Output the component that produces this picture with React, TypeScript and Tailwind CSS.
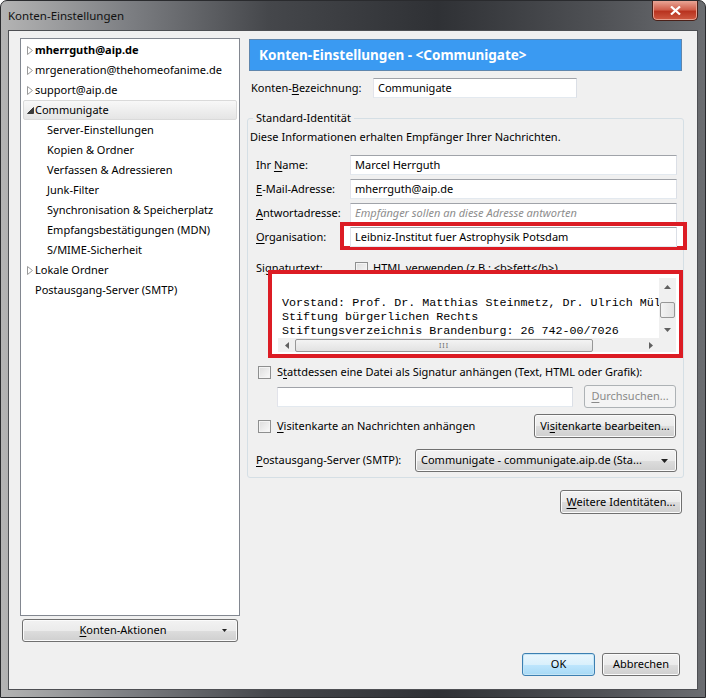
import React from 'react';

function U({ children }: { children: React.ReactNode }) {
  return <span className="underline decoration-1 underline-offset-[2px]">{children}</span>;
}

function Checkbox() {
  return (
    <span className="inline-block w-[13px] h-[13px] shrink-0 border border-[#8e8f8f] bg-[linear-gradient(135deg,#dcdcdc,#fafafa)] shadow-[inset_0_0_0_1px_#f4f4f4]" />
  );
}

function TextBox({ value, placeholder, className = '' }: { value?: string; placeholder?: string; className?: string }) {
  return (
    <div
      className={`h-[20px] min-w-0 bg-white border border-[#abadb3] border-t-[#a0a3a9] border-l-[#e2e3ea] border-r-[#dbdfe6] border-b-[#e3e9ef] flex items-center pl-[4px] overflow-hidden whitespace-nowrap ${className}`}
    >
      {value ? (
        <span className="text-black">{value}</span>
      ) : (
        <span className="italic text-[#8d8d8d]">{placeholder}</span>
      )}
    </div>
  );
}

function Button({
  children,
  className = '',
  disabled = false,
  primary = false,
}: {
  children: React.ReactNode;
  className?: string;
  disabled?: boolean;
  primary?: boolean;
}) {
  let look =
    'border-[#707070] bg-[linear-gradient(to_bottom,#f2f2f2_0%,#ebebeb_50%,#dddddd_51%,#cfcfcf_100%)] shadow-[inset_0_0_0_1px_#fbfbfb] text-black';
  if (disabled) look = 'border-[#adb2b5] bg-[#f4f4f4] text-[#8a8a8a]';
  if (primary)
    look =
      'border-[#3c7fb1] bg-[linear-gradient(to_bottom,#eaf6fd_0%,#d9f0fc_50%,#bee6fd_51%,#a7d9f5_100%)] shadow-[inset_0_0_0_1px_#c4e5f6] text-black';
  return (
    <div className={`flex items-center justify-center rounded-[3px] border ${look} ${className}`}>{children}</div>
  );
}

function Collapsed() {
  return (
    <svg width="6" height="9" viewBox="0 0 6 9">
      <path d="M0.5 0.5 L5.5 4.5 L0.5 8.5 Z" fill="#fff" stroke="#9a9a9a" strokeWidth="1" />
    </svg>
  );
}

function Expanded() {
  return (
    <svg width="7" height="7" viewBox="0 0 7 7">
      <path d="M6.5 0.5 L6.5 6.5 L0.5 6.5 Z" fill="#3c3c3c" stroke="#3c3c3c" strokeWidth="1" />
    </svg>
  );
}

type Node = { label: string; state?: 'open' | 'closed'; sub?: boolean; bold?: boolean; selected?: boolean };

const tree: Node[] = [
  { label: 'mherrguth@aip.de', state: 'closed', bold: true },
  { label: 'mrgeneration@thehomeofanime.de', state: 'closed' },
  { label: 'support@aip.de', state: 'closed' },
  { label: 'Communigate', state: 'open', selected: true },
  { label: 'Server-Einstellungen', sub: true },
  { label: 'Kopien & Ordner', sub: true },
  { label: 'Verfassen & Adressieren', sub: true },
  { label: 'Junk-Filter', sub: true },
  { label: 'Synchronisation & Speicherplatz', sub: true },
  { label: 'Empfangsbestätigungen (MDN)', sub: true },
  { label: 'S/MIME-Sicherheit', sub: true },
  { label: 'Lokale Ordner', state: 'closed' },
  { label: 'Postausgang-Server (SMTP)' },
];

function TreeRow({ node }: { node: Node }) {
  return (
    <div
      className={`h-[20px] mx-[2px] flex items-center rounded-[2px] border ${
        node.selected
          ? 'border-[#dadada] bg-[linear-gradient(to_bottom,#f8f8f8,#e5e5e5)]'
          : 'border-transparent'
      }`}
    >
      {node.sub ? (
        <span className="w-[23px] shrink-0" />
      ) : (
        <span className="w-[11px] shrink-0 flex items-center pl-[3px]">
          {node.state === 'closed' && <Collapsed />}
          {node.state === 'open' && <Expanded />}
        </span>
      )}
      <span className={`whitespace-nowrap ${node.bold ? 'font-bold' : ''}`}>{node.label}</span>
    </div>
  );
}

function VScrollbar() {
  return (
    <div className="w-[17px] shrink-0 bg-[#f0f0f0] flex flex-col items-center">
      <div className="h-[17px] w-full flex items-center justify-center">
        <svg width="7" height="4" viewBox="0 0 7 4">
          <path d="M0 4 L3.5 0 L7 4 Z" fill="#606060" />
        </svg>
      </div>
      <div className="w-[15px] h-[16px] mt-[7px] rounded-[2px] border border-[#979797] bg-[linear-gradient(to_right,#f3f3f3,#e2e2e2)]" />
      <div className="flex-1" />
      <div className="h-[17px] w-full flex items-center justify-center">
        <svg width="7" height="4" viewBox="0 0 7 4">
          <path d="M0 0 L7 0 L3.5 4 Z" fill="#606060" />
        </svg>
      </div>
    </div>
  );
}

function HScrollbar() {
  return (
    <div className="flex-1 min-w-0 h-[14px] bg-[#f0f0f0] flex items-center">
      <div className="w-[17px] shrink-0 flex items-center justify-center">
        <svg width="4" height="7" viewBox="0 0 4 7">
          <path d="M4 0 L0 3.5 L4 7 Z" fill="#606060" />
        </svg>
      </div>
      <div className="w-[298px] h-[13px] rounded-[2px] border border-[#979797] bg-[linear-gradient(to_bottom,#f3f3f3,#e2e2e2)] flex items-center justify-center">
        <span className="text-[7px] leading-none tracking-[1px] text-[#6a6a6a]">III</span>
      </div>
      <div className="flex-1" />
      <div className="w-[17px] shrink-0 flex items-center justify-center">
        <svg width="4" height="7" viewBox="0 0 4 7">
          <path d="M0 0 L4 3.5 L0 7 Z" fill="#606060" />
        </svg>
      </div>
    </div>
  );
}

export default function App() {
  return (
    <div className="w-[706px] h-[698px] font-['Noto_Sans',sans-serif] text-[11px] text-black rounded-t-[7px] border border-[#2a2b2e] bg-[linear-gradient(to_right,#b4b4b4,#7d7f83_18%,#45474b_38%,#2f3135_62%,#4f5155_85%,#6b6d71)] flex flex-col">
      {/* title bar */}
      <div className="h-[29px] flex items-start">
        <span className="pl-[7px] pt-[6px] text-[11.5px] text-[#111] whitespace-nowrap">Konten-Einstellungen</span>
        <div className="ml-auto mr-[7px] w-[46px] h-[20px] rounded-b-[5px] border border-t-0 border-[#4a2018] bg-[linear-gradient(to_bottom,#e9a595_0%,#d0604d_45%,#b93420_55%,#cf5a42_100%)] shadow-[inset_0_0_0_1px_#e7a191] flex items-center justify-center">
          <svg width="11" height="9" viewBox="0 0 11 9">
            <path d="M1 0.5 L10 8.5 M10 0.5 L1 8.5" stroke="#fff" strokeWidth="2.2" />
          </svg>
        </div>
      </div>

      {/* client area */}
      <div className="mx-[7px] h-[660px] bg-[#f0f0f0] border border-[#4d4f53] flex flex-col pt-[7px] pl-[11px] pr-[15px]">
        <div className="h-[604px] flex">
          {/* left column */}
          <div className="w-[220px] shrink-0 flex flex-col">
            <div className="flex-1 bg-white border border-[#828790] pt-[1px]">
              {tree.map((n) => (
                <TreeRow key={n.label} node={n} />
              ))}
            </div>
            <Button className="mt-[3px] h-[23px] mx-[2px] relative">
              <span className="pr-[14px]">
                <U>K</U>onten-Aktionen
              </span>
              <svg className="absolute right-[10px] top-[9px]" width="5" height="3" viewBox="0 0 5 3">
                <path d="M0 0 L5 0 L2.5 3 Z" fill="#222" />
              </svg>
            </Button>
          </div>

          {/* right column */}
          <div className="ml-[9px] w-[433px] shrink-0 min-w-0 flex flex-col">
            <div className="mt-[1px] h-[32px] bg-[#3a9af2] border border-[#5f86ad] flex items-center pl-[9px] text-white font-bold text-[13.5px] whitespace-nowrap">
              Konten-Einstellungen - &lt;Communigate&gt;
            </div>

            <div className="mt-[7px] h-[20px] flex items-center">
              <span className="pl-[2px] w-[124px] shrink-0 whitespace-nowrap">
                Konten-<U>B</U>ezeichnung:
              </span>
              <TextBox className="w-[204px]" value="Communigate" />
            </div>

            <fieldset className="mt-[12px] -mx-[2px] border border-[#d5dfe5] rounded-[3px] pb-[5px] min-w-0">
              <legend className="ml-[5px] px-[3px] leading-[16px]">Standard-Identität</legend>
              <div className="mt-[3px] pl-[2px] leading-[16px]">Diese Informationen erhalten Empfänger Ihrer Nachrichten.</div>

              <div className="mt-[10px] flex flex-col gap-[4px]">
                <div className="h-[20px] flex items-center">
                  <span className="pl-[8px] w-[102px] shrink-0">
                    Ihr <U>N</U>ame:
                  </span>
                  <TextBox className="flex-1 mr-[6px]" value="Marcel Herrguth" />
                </div>
                <div className="h-[20px] flex items-center">
                  <span className="pl-[8px] w-[102px] shrink-0">
                    <U>E</U>-Mail-Adresse:
                  </span>
                  <TextBox className="flex-1 mr-[6px]" value="mherrguth@aip.de" />
                </div>
                <div className="h-[20px] flex items-center">
                  <span className="pl-[8px] w-[102px] shrink-0">
                    <U>A</U>ntwortadresse:
                  </span>
                  <TextBox className="flex-1 mr-[6px]" placeholder="Empfänger sollen an diese Adresse antworten" />
                </div>
                <div className="h-[20px] flex items-center">
                  <span className="pl-[8px] w-[102px] shrink-0">
                    <U>O</U>rganisation:
                  </span>
                  <div className="flex-1 min-w-0 mr-[6px] relative">
                    <div className="absolute -left-[10px] -right-[10px] -top-[5px] -bottom-[3px] border-[4px] border-[#dc1c24] bg-white" />
                    <TextBox className="relative" value="Leibniz-Institut fuer Astrophysik Potsdam" />
                  </div>
                </div>
              </div>

              <div className="mt-[13px] h-[16px] flex items-center">
                <span className="pl-[8px] w-[107px] shrink-0">
                  Si<U>g</U>naturtext:
                </span>
                <Checkbox />
                <span className="ml-[5px] whitespace-nowrap">
                  <U>H</U>TML verwenden (z.B.: &lt;b&gt;fett&lt;/b&gt;)
                </span>
              </div>

              <div className="relative -mt-[2px] ml-[24px] mr-[4px] h-[80px] bg-white pt-[4px] pl-[6px] pr-[3px] pb-[2px]">
                <div className="h-full flex flex-col">
                  <div className="h-[60px] flex">
                    <div className="flex-1 min-w-0 overflow-hidden whitespace-pre pl-[4px] pt-[4px] font-['Liberation_Mono',monospace] text-[11.7px] leading-[14px]">
                      {'\nVorstand: Prof. Dr. Matthias Steinmetz, Dr. Ulrich Müller\nStiftung bürgerlichen Rechts\nStiftungsverzeichnis Brandenburg: 26 742-00/7026'}
                    </div>
                    <VScrollbar />
                  </div>
                  <div className="h-[14px] flex">
                    <HScrollbar />
                    <div className="w-[17px] shrink-0 bg-[#f0f0f0]" />
                  </div>
                </div>
                <div className="absolute -inset-[4px] border-[4px] border-[#dc1c24] pointer-events-none" />
              </div>

              <div className="mt-[10px] h-[16px] flex items-center pl-[10px]">
                <Checkbox />
                <span className="ml-[6px] whitespace-nowrap">
                  S<U>t</U>attdessen eine Datei als Signatur anhängen (Text, HTML oder Grafik):
                </span>
              </div>

              <div className="mt-[5px] h-[23px] flex items-center">
                <TextBox className="ml-[29px] w-[296px]" value="" placeholder="" />
                <Button disabled className="ml-[11px] w-[92px] h-[23px]">
                  <span>
                    <U>D</U>urchsuchen...
                  </span>
                </Button>
              </div>

              <div className="mt-[6px] h-[24px] flex items-center pl-[10px]">
                <Checkbox />
                <span className="ml-[6px] whitespace-nowrap">
                  <U>V</U>isitenkarte an Nachrichten anhängen
                </span>
                <Button className="ml-auto mr-[7px] w-[142px] h-[24px]">
                  <span>
                    Vi<U>s</U>itenkarte bearbeiten...
                  </span>
                </Button>
              </div>

              <div className="mt-[11px] h-[23px] flex items-center">
                <span className="pl-[8px] w-[167px] shrink-0 whitespace-nowrap">
                  <U>P</U>ostausgang-Server (SMTP):
                </span>
                <Button className="w-[262px] h-[23px] mr-[6px] !justify-start pl-[5px]">
                  <span className="whitespace-nowrap">Communigate - communigate.aip.de (Sta...</span>
                  <svg className="ml-auto mr-[8px]" width="7" height="4" viewBox="0 0 7 4">
                    <path d="M0 0 L7 0 L3.5 4 Z" fill="#222" />
                  </svg>
                </Button>
              </div>
            </fieldset>

            <div className="mt-[12px] flex justify-end">
              <Button className="w-[122px] h-[24px]">
                <span>
                  <U>W</U>eitere Identitäten...
                </span>
              </Button>
            </div>
          </div>
        </div>

        <div className="mt-[11px] h-[23px] flex justify-end gap-[7px] mr-[2px]">
          <Button primary className="w-[73px] h-[23px]">
            OK
          </Button>
          <Button className="w-[78px] h-[23px]">Abbrechen</Button>
        </div>
      </div>
    </div>
  );
}
